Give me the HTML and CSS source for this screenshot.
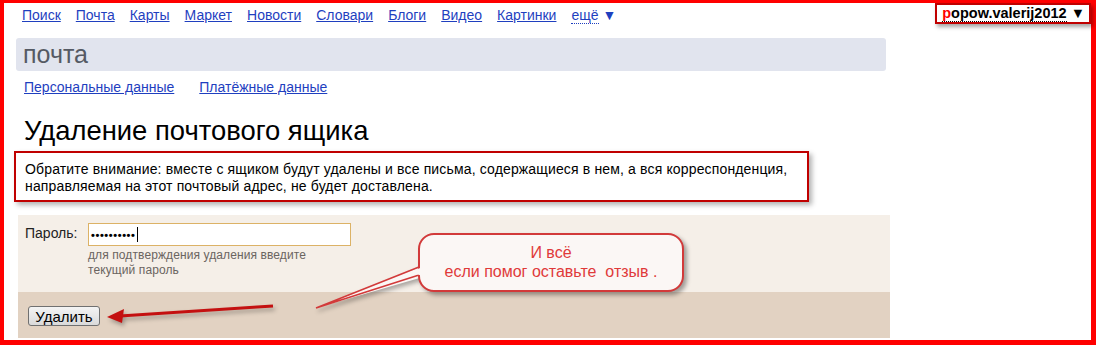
FILE: index.html
```html
<!DOCTYPE html>
<html>

<head>
  <meta charset="utf-8" />
  <title>Удаление почтового ящика</title>
  <link rel="stylesheet" href="styles.css">
</head>

<body>
  <div class="frame">
    <div class="header">
      <div class="nav">
        <a href="#">Поиск</a>
        <a href="#">Почта</a>
        <a href="#">Карты</a>
        <a href="#">Маркет</a>
        <a href="#">Новости</a>
        <a href="#">Словари</a>
        <a href="#">Блоги</a>
        <a href="#">Видео</a>
        <a href="#">Картинки</a>
        <span class="more"><span class="dotted">ещё</span> ▼</span>
      </div>
      <div class="user"><span class="login"><span class="first">p</span>opow.valerij2012</span> ▼</div>
    </div>

    <div class="content">
      <div class="service-bar">почта</div>
      <div class="sublinks">
        <a href="#">Персональные данные</a>
        <a href="#">Платёжные данные</a>
      </div>
      <h1>Удаление почтового ящика</h1>
      <div class="notice">
        Обратите внимание: вместе с ящиком будут удалены и все письма, содержащиеся в нем, а вся корреспонденция,
        направляемая на этот почтовый адрес, не будет доставлена.
      </div>
      <div class="form">
        <div class="form-fields">
          <label for="pwd">Пароль:</label>
          <div>
            <div class="input_pwd"><span class="dots">••••••••••</span><span class="caret"></span></div>
            <div class="hint">для подтверждения удаления введите текущий пароль</div>
          </div>
        </div>
        <div class="form-actions">
          <button class="btn" type="button">Удалить</button>
        </div>
      </div>
    </div>

    <!-- annotations drawn over the screenshot -->
    <svg class="marks" width="1096" height="345" viewBox="0 0 1096 345">
      <path d="M423 266 L316 308 L423 277 Z" fill="#fbf7f5" />
      <path d="M419 267 L316 308 L419 275" fill="none" stroke="#d23a3a" stroke-width="1.6" />
      <line x1="273" y1="306" x2="120" y2="316" stroke="#c41010" stroke-width="3" />
      <path d="M107 317 L124 309 L122 323 Z" fill="#c41010" />
    </svg>
    <div class="bubble">И всё<br>если помог оставьте&nbsp; отзыв .</div>
    <svg class="marks marks-top" width="1096" height="345" viewBox="0 0 1096 345">
      <path d="M424 266.5 L410 272 L424 276.5 Z" fill="#fbf7f5" />
    </svg>
  </div>
</body>

</html>
```
FILE: styles.css
```css
html,
body {
  margin: 0;
  padding: 0;
  overflow: hidden;
}

body {
  font-family: "Liberation Sans", Arial, sans-serif;
  font-size: 14px;
  color: #000;
}

a {
  color: #1f3fbf;
}

.frame {
  box-sizing: border-box;
  position: relative;
  width: 1096px;
  height: 345px;
  border-style: solid;
  border-color: #ff0000;
  border-width: 3px 5px 5px 4px;
  background: #fff;
}

.header {
  display: flex;
  justify-content: space-between;
  align-items: flex-start;
  height: 21px;
}

.nav {
  display: flex;
  gap: 15px;
  padding: 4px 0 0 18px;
  line-height: 16px;
}

.more {
  color: #1f3fbf;
}

.dotted {
  border-bottom: 1px dotted #1f3fbf;
}

.user {
  border: 2px solid #c00000;
  padding: 0 4px 0 5px;
  font-size: 14.5px;
  font-weight: bold;
  line-height: 17px;
  box-shadow: 2px 3px 4px rgba(0, 0, 0, 0.35);
  background: #fff;
}

.login {
  border-bottom: 1px dotted #000;
}

.first {
  color: #f00;
}

.content {
  padding-left: 10px;
}

.service-bar {
  margin: 14px 0 0 2px;
  width: 863px;
  height: 33px;
  padding-left: 7px;
  background: #e1e4ee;
  border-radius: 3px;
  font-size: 25px;
  line-height: 33px;
  color: #555a64;
}

.sublinks {
  display: flex;
  gap: 25px;
  margin-top: 8px;
  padding-left: 10px;
  line-height: 16px;
}

h1 {
  margin: 21px 0 0 10px;
  font-size: 27.4px;
  font-weight: normal;
  line-height: 30px;
}

.notice {
  box-sizing: border-box;
  margin-top: 5px;
  width: 795px;
  height: 51px;
  padding: 8px 9px 0 9px;
  border: 2px solid #c00000;
  line-height: 17px;
  letter-spacing: 0.15px;
  box-shadow: 3px 3px 5px rgba(0, 0, 0, 0.3);
}

.form {
  margin: 13px 0 0 4px;
  width: 872px;
}

.form-fields {
  display: flex;
  padding: 8px 0 14px 7px;
  height: 55px;
  background: #f5efe8;
}

.form-fields label {
  width: 63px;
  padding-top: 2px;
  color: #222;
}

.input_pwd {
  box-sizing: border-box;
  display: flex;
  align-items: center;
  width: 263px;
  height: 23px;
  padding: 0 2px;
  border: 1px solid #dcb266;
  font-size: 11px;
  background: #fff;
}

.dots {
  font-weight: bold;
  letter-spacing: 0.6px;
}

.caret {
  width: 1px;
  height: 15px;
  margin-left: 1px;
  background: #000;
}

.hint {
  width: 240px;
  margin-top: 2px;
  font-size: 12px;
  line-height: 15px;
  letter-spacing: 0.1px;
  color: #6a6460;
}

.form-actions {
  height: 46px;
  padding: 14px 0 0 10px;
  box-sizing: border-box;
  background: #e2d2c2;
}

.btn {
  box-sizing: border-box;
  height: 20px;
  width: 72px;
  padding: 0;
  border: 1px solid #707070;
  border-radius: 3px;
  background: linear-gradient(#f4f4f4, #dadada);
  font-family: inherit;
  font-size: 15px;
  line-height: 17px;
  color: #000;
}

.marks {
  position: absolute;
  left: -4px;
  top: -3px;
  pointer-events: none;
  filter: drop-shadow(2px 3px 2px rgba(0, 0, 0, 0.3));
}

.marks-top {
  filter: none;
}

.bubble {
  position: absolute;
  left: 414px;
  top: 230px;
  box-sizing: border-box;
  width: 266px;
  height: 59px;
  padding-top: 8px;
  border: 2px solid #d23a3a;
  border-radius: 16px;
  background: #fbf7f5;
  box-shadow: 3px 3px 4px rgba(0, 0, 0, 0.35);
  color: #e03a3a;
  font-size: 16px;
  line-height: 19px;
  text-align: center;
}
```
